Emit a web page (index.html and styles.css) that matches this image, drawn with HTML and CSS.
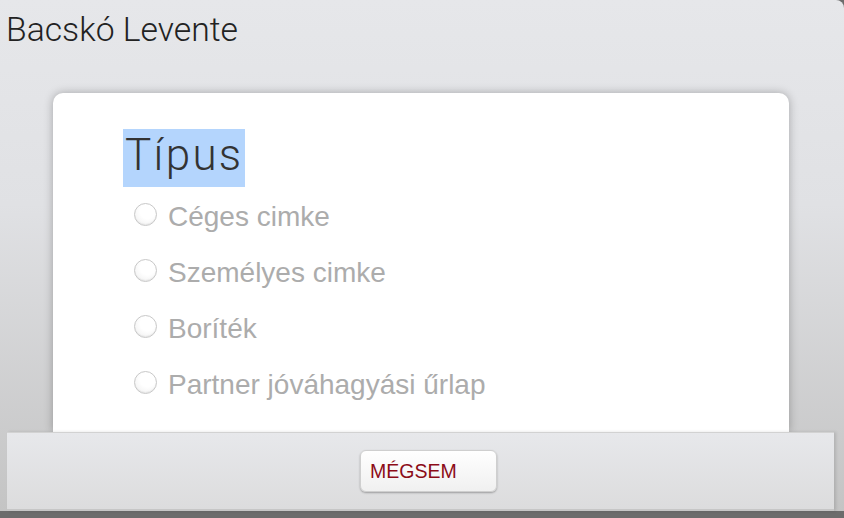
FILE: index.html
```html
<!DOCTYPE html>
<html lang="hu">
<head>
<meta charset="utf-8">
<title>Típus</title>
<link rel="stylesheet" href="styles.css">
</head>
<body>
<div class="screen">
  <h1 class="user-name">Bacskó Levente</h1>
  <div class="card">
    <h2 class="card-title"><span class="selected">Típus</span></h2>
    <ul class="options">
      <li class="option"><span class="radio"></span><span class="label">Céges cimke</span></li>
      <li class="option"><span class="radio"></span><span class="label">Személyes cimke</span></li>
      <li class="option"><span class="radio"></span><span class="label">Boríték</span></li>
      <li class="option"><span class="radio"></span><span class="label">Partner jóváhagyási űrlap</span></li>
    </ul>
  </div>
  <div class="footer">
    <button class="btn-cancel">MÉGSEM</button>
  </div>
</div>
</body>
</html>
```
FILE: styles.css
```css
html, body {
  margin: 0;
  padding: 0;
}
body {
  width: 844px;
  height: 518px;
  overflow: hidden;
  background: #6c6c6c;
}
.screen {
  height: 511px;
  display: flex;
  flex-direction: column;
  background: linear-gradient(#e6e7ea 0%, #e0e1e4 40%, #c4c4c4 100%);
  border-top-right-radius: 8px;
}
.user-name {
  margin: 0;
  height: 93px;
  box-sizing: border-box;
  padding: 10px 0 0 6px;
  font-family: Roboto, "Liberation Sans", sans-serif;
  font-weight: 300;
  font-size: 33.7px;
  line-height: 40px;
  color: #222;
}
.card {
  flex: 1;
  margin: 0 55px 0 53px;
  background: #fff;
  border-radius: 10px 10px 0 0;
  box-shadow: 0 0 10px rgba(0, 0, 0, 0.28);
  padding: 36px 0 0 70px;
}
.card-title {
  margin: 0;
  font-family: Roboto, "Liberation Sans", sans-serif;
  font-weight: 300;
  font-size: 44px;
  line-height: 52px;
  letter-spacing: 2.3px;
  color: #333;
}
.selected {
  display: inline-block;
  background: #b4d5fd;
  padding: 0 2px 6px 2px;
}
.options {
  list-style: none;
  margin: 2px 0 0;
  padding: 0 0 0 11px;
}
.option {
  height: 56px;
  display: flex;
  align-items: center;
}
.radio {
  width: 23px;
  height: 23px;
  box-sizing: border-box;
  border-radius: 50%;
  border: 1px solid #c8c8c8;
  background: radial-gradient(circle at 60% 35%, #ffffff 40%, #ededed 100%);
  box-shadow: inset 0 -1px 1px rgba(0,0,0,0.06);
  margin-right: 11px;
  margin-top: -6px;
}
.label {
  font-family: "Liberation Sans", Arial, sans-serif;
  font-size: 28px;
  line-height: 32px;
  color: #acacac;
}
.footer {
  height: 79px;
  margin: 0 10px 0 7px;
  box-sizing: border-box;
  border-top: 1px solid #d2d2d2;
  border-bottom: 2px solid #c6c6c6;
  background: linear-gradient(#e7e8eb, #dcdcdd);
  display: flex;
  justify-content: center;
  align-items: flex-start;
  padding: 17px 0 0 16px;
  box-shadow: 2px 0 3px rgba(0,0,0,0.12);
}
.btn-cancel {
  width: 137px;
  height: 42px;
  box-sizing: border-box;
  border: 1px solid #cfcfcf;
  border-radius: 6px;
  background: linear-gradient(#ffffff, #f0f0f0);
  box-shadow: 0 1px 2px rgba(0,0,0,0.3);
  text-align: left;
  padding: 0 0 0 9px;
  font-family: "Liberation Sans", Arial, sans-serif;
  font-size: 19.5px;
  color: #8c0c18;
}
```
